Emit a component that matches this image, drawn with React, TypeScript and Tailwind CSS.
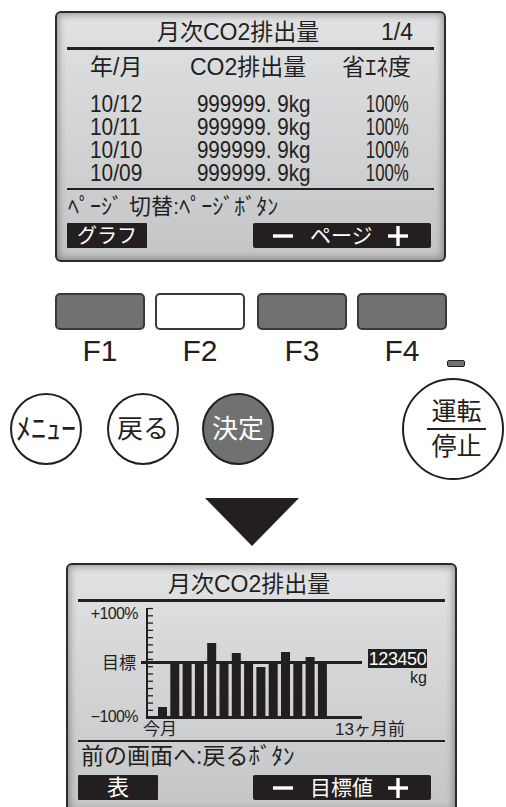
import React from "react";
import { clsx } from "clsx";

const INK = "#231f20";

function Plus() {
  return (
    <svg width="20" height="20" viewBox="0 0 20 20">
      <rect x="0" y="8.3" width="20" height="3.4" fill="white" />
      <rect x="8.3" y="0" width="3.4" height="20" fill="white" />
    </svg>
  );
}

function Minus() {
  return (
    <svg width="20" height="4" viewBox="0 0 20 4">
      <rect x="0" y="0.3" width="20" height="3.4" fill="white" />
    </svg>
  );
}

type ScreenProps = {
  title: string;
  page?: string;
  body: React.ReactNode;
  message: string;
  messageClass: string;
  leftLabel: string;
  leftClass: string;
  rightLabel: string;
  rightClass: string;
  className: string;
};

function Screen(p: ScreenProps) {
  return (
    <div
      className={clsx(
        "w-[391px] h-[251px] shrink-0 rounded-[6px] border-2 border-[#2b2b2b] bg-gradient-to-b from-[#e1e2e4] to-[#c4c5c7] shadow-[inset_0_0_7px_2px_rgba(0,0,0,0.32)] flex flex-col text-[#231f20]",
        p.className
      )}
    >
      <div className="h-[34px] flex items-center pt-[3px] pl-[100px] pr-[31px] text-[23px] leading-[26px]">
        <span className="whitespace-nowrap">{p.title}</span>
        {p.page && <span className="ml-auto">{p.page}</span>}
      </div>
      <div className="h-[3px] mx-[10px] bg-[#231f20]" />
      <div className="h-[138px]">{p.body}</div>
      <div className="h-[2px] mx-[10px] bg-[#231f20]" />
      <div className={clsx("h-[33px] flex items-center pl-[11px] leading-[26px] whitespace-nowrap", p.messageClass)}>
        {p.message}
      </div>
      <div className="h-[25px] flex pl-[10px]">
        <div className={clsx("w-[80px] h-[25px] bg-[#231f20] rounded-[1px] text-white flex items-center justify-center leading-none", p.leftClass)}>
          {p.leftLabel}
        </div>
        <div className={clsx("w-[178px] h-[25px] bg-[#231f20] rounded-[2px] text-white flex items-center pl-[20px]", p.rightClass)}>
          <Minus />
          <span className="ml-[17px] w-[63px] text-[21px] leading-none whitespace-nowrap">{p.rightLabel}</span>
          <span className="ml-[15px] flex">
            <Plus />
          </span>
        </div>
      </div>
    </div>
  );
}

const ROWS = ["10/12", "10/11", "10/10", "10/09"];

function TableBody() {
  return (
    <div className="flex flex-col">
      <div className="grid grid-cols-[100px_152px_1fr] pl-[33px] h-[34px] items-center text-[23px] leading-[26px]">
        <span>年/月</span>
        <span>CO2排出量</span>
        <span>省ｴﾈ度</span>
      </div>
      <div className="mt-[8px] flex flex-col">
        {ROWS.map((r) => (
          <div key={r} className="grid grid-cols-[100px_152px_1fr] pl-[33px] h-[23px] text-[24px] leading-[23px]">
            <span className="inline-block origin-left scale-x-[0.87]">{r}</span>
            <span className="inline-block origin-left scale-x-[0.86] pl-[8px] whitespace-nowrap">999999. 9kg</span>
            <span className="inline-block origin-left scale-x-[0.7] pl-[34px]">100%</span>
          </div>
        ))}
      </div>
    </div>
  );
}

const BARS = [105, 59, 59, 59, 41, 59, 51, 59, 65, 59, 50, 59, 55, 59];

function ChartBody() {
  const ticks = Array.from({ length: 16 }, (_, k) => 6.5 + k * 7.27);
  return (
    <div className="h-[138px] flex flex-col">
      <div className="flex h-[118px]">
        <div className="w-[71px] flex flex-col items-end pr-[1px] text-[16px] leading-[16px] tracking-[-0.6px]">
          <span className="mt-[4px]">+100%</span>
          <span className="mt-[33px] text-[17px] leading-[17px] tracking-normal pr-[2px]">目標</span>
          <span className="mt-[37px]">−100%</span>
        </div>
        <svg width="224" height="118" viewBox="0 0 224 118" className="shrink-0">
          <rect x="7" y="6" width="2" height="111" fill={INK} />
          {ticks.map((y, k) => (
            <rect key={k} x="9" y={y - 0.6} width="5" height="1.3" fill={INK} />
          ))}
          {BARS.map((top, i) => (
            <rect key={i} x={19 + i * 12.3} y={top} width="9" height={116 - top} fill={INK} />
          ))}
          <rect x="2" y="59" width="5" height="3" fill={INK} />
          <rect x="8" y="59" width="215" height="3" fill={INK} />
          <rect x="8" y="114" width="215" height="3" fill={INK} />
        </svg>
        <div className="flex flex-col items-end w-[59px] ml-[5px]">
          <div className="mt-[47px] h-[19px] w-[59px] bg-[#231f20] text-white text-[18px] leading-none flex items-center justify-center tracking-[-0.4px]">
            123450
          </div>
          <div className="mt-[2px] h-[16px] text-[16px] leading-[16px]">kg</div>
        </div>
      </div>
      <div className="flex justify-between ml-[75px] w-[262px] h-[20px] items-center text-[17px] leading-[20px]">
        <span>今月</span>
        <span>13ヶ月前</span>
      </div>
    </div>
  );
}

function FKey({ white, className }: { white?: boolean; className?: string }) {
  return (
    <div
      className={clsx(
        "w-[90px] h-[37px] rounded-[5px] border-2 border-[#3a3a3a]",
        white ? "bg-white" : "bg-[#707173]",
        className
      )}
    />
  );
}

function Circle({ children, dark, className }: { children: React.ReactNode; dark?: boolean; className?: string }) {
  return (
    <div
      className={clsx(
        "w-[72px] h-[72px] rounded-full border-2 border-[#231f20] flex items-center justify-center shrink-0",
        dark ? "bg-[#707173] text-white" : "bg-white text-[#231f20]",
        className
      )}
    >
      {children}
    </div>
  );
}

export default function App() {
  return (
    <div className="w-[506px] h-[807px] overflow-hidden bg-white font-['Liberation_Sans','Noto_Sans_CJK_JP',sans-serif] text-[#231f20] flex flex-col">
      <Screen
        className="ml-[55px] mt-[11px]"
        title="月次CO2排出量"
        page="1/4"
        body={<TableBody />}
        message="ﾍﾟｰｼﾞ 切替:ﾍﾟｰｼﾞﾎﾞﾀﾝ"
        messageClass="text-[22px]"
        leftLabel="グラフ"
        leftClass="text-[20px]"
        rightLabel="ページ"
        rightClass="ml-[106px]"
      />

      {/* function keys */}
      <div className="flex mt-[31px] ml-[55px]">
        <FKey />
        <FKey white className="ml-[10px]" />
        <FKey className="ml-[12px]" />
        <FKey className="ml-[10px]" />
      </div>
      <div className="flex mt-[6px] ml-[55px] h-[30px] text-[30px] leading-[30px]">
        <span className="w-[90px] text-center">F1</span>
        <span className="w-[90px] ml-[10px] text-center">F2</span>
        <span className="w-[90px] ml-[12px] text-center">F3</span>
        <span className="w-[90px] ml-[10px] text-center">F4</span>
        <span className="mt-[24px] w-[18px] h-[7px] rounded-[2px] border border-[#231f20] bg-[#707173]" />
      </div>

      {/* round buttons */}
      <div className="flex items-center mt-[12px] h-[102px]">
        <Circle className="ml-[10px]">
          <span className="text-[30px] leading-none">ﾒﾆｭｰ</span>
        </Circle>
        <Circle className="ml-[25px]">
          <span className="text-[26px] leading-none">戻る</span>
        </Circle>
        <Circle dark className="ml-[23px]">
          <span className="text-[26px] leading-none">決定</span>
        </Circle>
        <div className="ml-[128px] w-[102px] h-[102px] rounded-full border-2 border-[#231f20] shrink-0 flex flex-col items-center justify-center pl-[7px] text-[25px] leading-[25px]">
          <span className="h-[25px]">運転</span>
          <span className="mt-[4px] h-[1.5px] w-[59px] bg-[#231f20]" />
          <span className="mt-[4px] h-[25px]">停止</span>
        </div>
      </div>

      {/* arrow */}
      <svg width="94" height="48" viewBox="0 0 94 48" className="mt-[18px] ml-[205px] shrink-0">
        <polygon points="0,0 94,0 47,48" fill={INK} />
      </svg>

      <Screen
        className="ml-[66px] mt-[17px]"
        title="月次CO2排出量"
        body={<ChartBody />}
        message="前の画面へ:戻るﾎﾞﾀﾝ"
        messageClass="text-[23px] pb-[6px] pl-[13px]"
        leftLabel="表"
        leftClass="text-[22px]"
        rightLabel="目標値"
        rightClass="ml-[95px]"
      />
    </div>
  );
}
